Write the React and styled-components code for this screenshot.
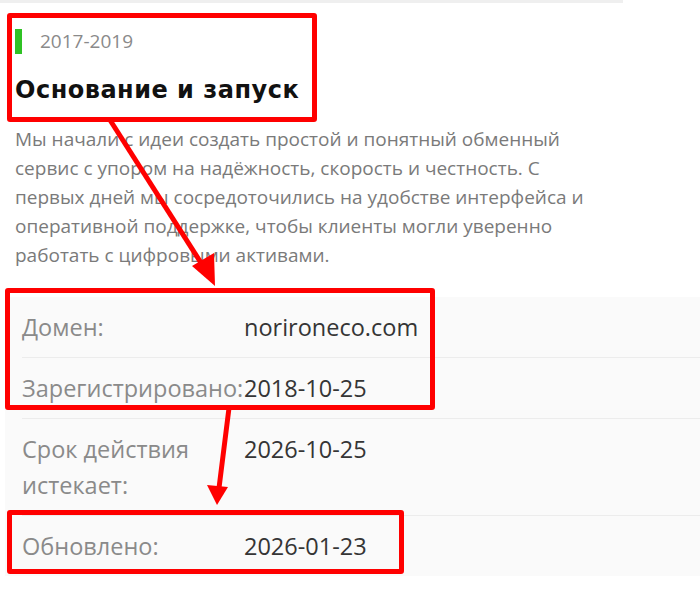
import React from 'react'
import styled, { createGlobalStyle } from 'styled-components'

const GlobalStyle = createGlobalStyle`
  html, body {
    margin: 0;
    padding: 0;
    background: #ffffff;
  }
`

const Page = styled.div`
  position: relative;
  width: 700px;
  height: 590px;
  overflow: hidden;
  background: #ffffff;
`

const TopStrip = styled.div`
  width: 623px;
  height: 3px;
  background: #efefef;
`

const Story = styled.section`
  padding: 25px 0 0 15px;
`

const Period = styled.div`
  display: flex;
  align-items: center;
  gap: 18px;
  height: 26px;
`

const Marker = styled.span`
  width: 7px;
  height: 25px;
  background: #2fc224;
`

const Years = styled.span`
  font-family: "Open Sans", sans-serif;
  font-size: 19px;
  color: #8a8a8a;
`

const Title = styled.h2`
  margin: 21px 0 0;
  font-family: "DejaVu Sans", Verdana, sans-serif;
  font-weight: bold;
  font-size: 24px;
  letter-spacing: 0.5px;
  line-height: 30px;
  color: #111111;
`

const Text = styled.p`
  margin: 20px 0 0;
  width: 585px;
  font-family: "Open Sans", sans-serif;
  font-size: 19px;
  line-height: 29px;
  color: #7a7a7a;
`

const InfoTable = styled.div`
  margin: 27px 0 0 5px;
  padding-left: 17px;
  background: #fafafa;
`

const InfoRow = styled.div`
  display: grid;
  grid-template-columns: 222px 1fr;
  padding: 12px 0;
  border-top: ${(p) => (p.first ? 'none' : '1px solid #ececec')};
  font-family: "Open Sans", sans-serif;
  font-size: 23.5px;
  line-height: 36px;
`

const Label = styled.div`
  color: #8a8a8a;
`

const Value = styled.div`
  color: #353535;
`

const Frame = styled.div`
  position: absolute;
  left: ${(p) => p.x}px;
  top: ${(p) => p.y}px;
  width: ${(p) => p.w}px;
  height: ${(p) => p.h}px;
  box-sizing: border-box;
  border: 5px solid #ff0000;
  border-radius: 3px;
  pointer-events: none;
`

const Arrows = styled.svg`
  position: absolute;
  left: 0;
  top: 0;
  pointer-events: none;
`

const rows = [
  { label: 'Домен:', value: 'norironeco.com' },
  { label: 'Зарегистрировано:', value: '2018-10-25' },
  { label: 'Срок действия истекает:', value: '2026-10-25' },
  { label: 'Обновлено:', value: '2026-01-23' },
]

export default function App() {
  return (
    <>
      <GlobalStyle />
      <Page>
        <TopStrip />
        <Story>
          <Period>
            <Marker />
            <Years>2017-2019</Years>
          </Period>
          <Title>Основание и запуск</Title>
          <Text>
            Мы начали с идеи создать простой и понятный обменный сервис с упором на надёжность,
            скорость и честность. С первых дней мы сосредоточились на удобстве интерфейса и
            оперативной поддержке, чтобы клиенты могли уверенно работать с цифровыми активами.
          </Text>
        </Story>
        <InfoTable>
          {rows.map((r, i) => (
            <InfoRow key={r.label} first={i === 0}>
              <Label>{r.label}</Label>
              <Value>{r.value}</Value>
            </InfoRow>
          ))}
        </InfoTable>

        <Frame x={7} y={13} w={310} h={109} />
        <Frame x={5} y={288} w={430} h={122} />
        <Frame x={7} y={510} w={397} h={64} />
        <Arrows width="700" height="590" viewBox="0 0 700 590">
          <line x1="110" y1="120" x2="203" y2="266" stroke="#ff0000" strokeWidth="5" />
          <polygon points="215,286 192,266 214,253" fill="#ff0000" />
          <line x1="229" y1="408" x2="219" y2="488" stroke="#ff0000" strokeWidth="5" />
          <polygon points="217,505 207,485 228,487" fill="#ff0000" />
        </Arrows>
      </Page>
    </>
  )
}
